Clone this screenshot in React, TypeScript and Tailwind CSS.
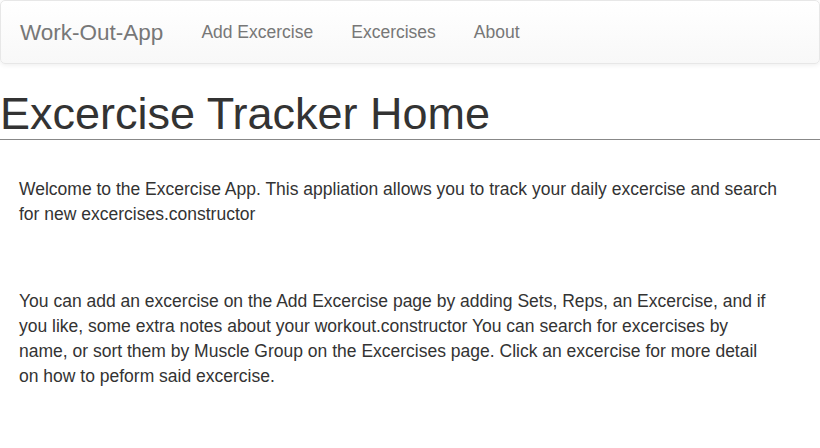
export default function App() {
  return (
    <div className="min-h-screen bg-white font-['Liberation_Sans',Arial,sans-serif] text-[17.5px] leading-[25px] text-[#333]">
      <nav className="flex h-[64px] items-center rounded-[5px] border border-[#e7e7e7] bg-gradient-to-b from-white to-[#f8f8f8] shadow-[inset_0_1px_0_rgba(255,255,255,0.15),0_1px_5px_rgba(0,0,0,0.075)]">
        <a href="#" className="px-[19px] text-[22.5px] text-[#777]">
          Work-Out-App
        </a>
        <ul className="flex">
          <li>
            <a href="#" className="block px-[19px] text-[#777]">Add Excercise</a>
          </li>
          <li>
            <a href="#" className="block px-[19px] text-[#777]">Excercises</a>
          </li>
          <li>
            <a href="#" className="block px-[19px] text-[#777]">About</a>
          </li>
        </ul>
      </nav>

      <h1 className="mt-[25px] border-b border-[#888] text-[45px] leading-[50px]">
        Excercise Tracker Home
      </h1>

      <div className="px-[19px] pr-[40px]">
        <p className="mt-[37px]">
          Welcome to the Excercise App. This appliation allows you to track your daily excercise and search for new excercises.constructor
        </p>
        <p className="mt-[62px]">
          You can add an excercise on the Add Excercise page by adding Sets, Reps, an Excercise, and if you like, some extra notes about your workout.constructor You can search for excercises by name, or sort them by Muscle Group on the Excercises page. Click an excercise for more detail on how to peform said excercise.
        </p>
      </div>
    </div>
  )
}
